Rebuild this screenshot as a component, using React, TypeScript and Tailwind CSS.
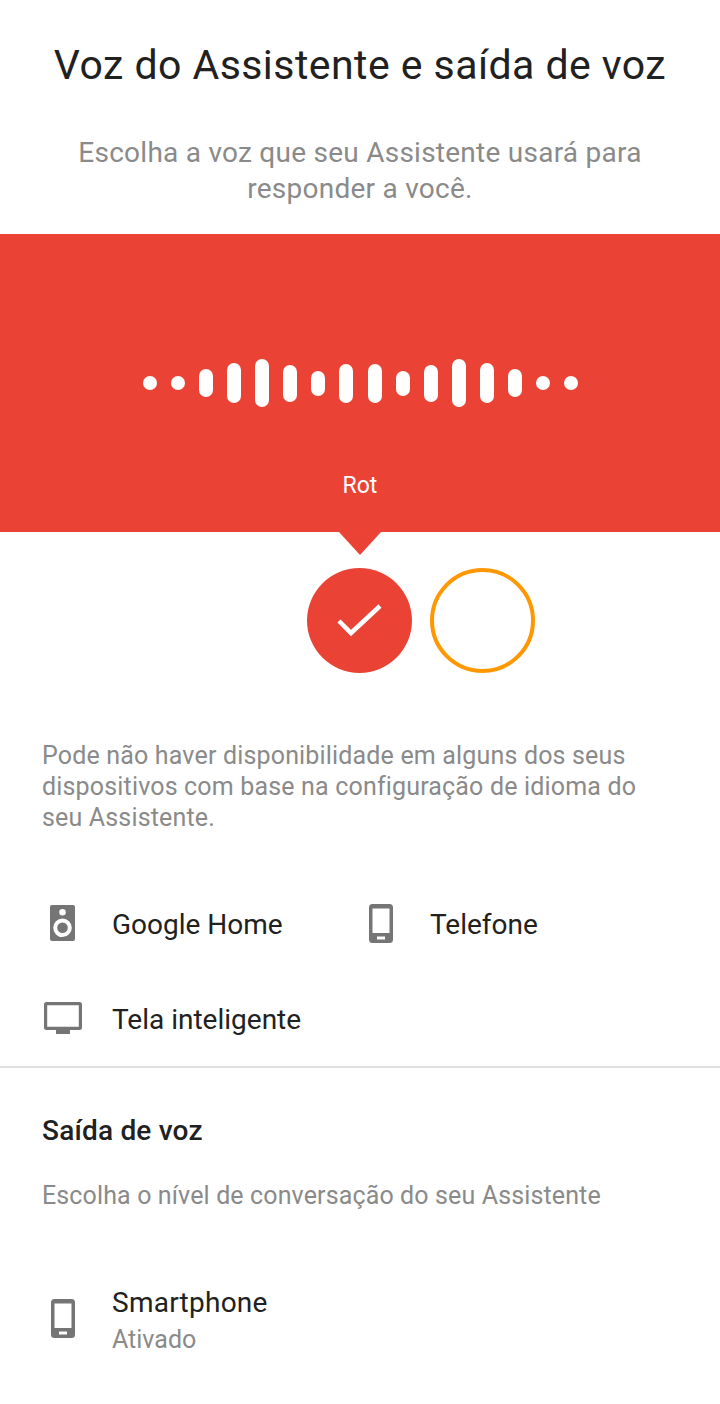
const bars = [14, 14, 28, 40, 48, 37, 25, 39, 39, 25, 37, 48, 40, 28, 14, 14];

function Speaker() {
  return (
    <svg width="25" height="36" viewBox="0 0 25 36" className="block">
      <path fillRule="evenodd" fill="#757575" d="M2 0h21a2 2 0 0 1 2 2v32a2 2 0 0 1-2 2H2a2 2 0 0 1-2-2V2a2 2 0 0 1 2-2Zm10.500 4a3.300 3.300 0 1 0 0 6.600 3.300 3.300 0 0 0 0-6.600Zm0 9.500a9.300 9.300 0 1 0 0 18.600 9.300 9.300 0 0 0 0-18.600Z" />
      <circle cx="12.500" cy="22.800" r="5.300" fill="#757575" />
    </svg>
  );
}

function Phone() {
  return (
    <svg width="24" height="39" viewBox="0 0 24 39" className="block">
      <path fillRule="evenodd" fill="#757575" d="M3.500 0h17A3.500 3.500 0 0 1 24 3.500v32a3.500 3.500 0 0 1-3.500 3.500h-17A3.500 3.500 0 0 1 0 35.500v-32A3.500 3.500 0 0 1 3.500 0Zm0 4.500V29h17V4.500h-17Zm4.500 28v3h8v-3H8Z" />
    </svg>
  );
}

function Tv() {
  return (
    <svg width="38" height="32" viewBox="0 0 38 32" className="block">
      <path fillRule="evenodd" fill="#757575" d="M2.500 0h33A2.500 2.500 0 0 1 38 2.500V25.500a2.500 2.500 0 0 1-2.500 2.500H26V32H12V28H2.500A2.500 2.500 0 0 1 0 25.500V2.500A2.500 2.500 0 0 1 2.500 0Zm.7 3.200v21.600h31.600V3.200H3.200Z" />
    </svg>
  );
}

export default function App() {
  return (
    <div className="h-[1404px] w-[720px] overflow-hidden bg-white font-['Roboto',sans-serif]">
      <h1 className="h-[120px] pt-[37px] text-center text-[41px] leading-[56px] font-normal tracking-[0.45px] whitespace-nowrap text-[#212121]">
        Voz do Assistente e saída de voz
      </h1>
      <p className="h-[114px] px-[60px] pt-[15px] text-center text-[28px] leading-[36px] tracking-[0.25px] text-[#8a8a8a]">
        Escolha a voz que seu Assistente usará para responder a você.
      </p>
      <div className="relative h-[298px] bg-[#ea4335]">
        <div className="flex h-[298px] flex-col items-center">
          <div className="mt-[125px] ml-[1px] flex h-[48px] items-center gap-[13.9px]">
            {bars.map((h, i) => (
              <span key={i} style={{ height: h }} className={`block w-[14px] rounded-full bg-white ${i === 8 ? "ml-[2px]" : ""}`} />
            ))}
          </div>
          <span className="mt-[64px] text-[23px] leading-[30px] font-normal text-white">Rot</span>
        </div>
        <div className="absolute top-[298px] left-[339px] h-0 w-0 border-x-[21px] border-t-[23px] border-x-transparent border-t-[#ea4335]" />
      </div>
      <div className="flex gap-[18px] pt-[36px] pl-[307px]">
        <div className="flex h-[105px] w-[105px] items-center justify-center rounded-full bg-[#ea4335]">
          <svg width="48" height="36" viewBox="0 0 48 36" fill="none">
            <path d="M3 18 15 30 44 3" stroke="white" strokeWidth="4.5" />
          </svg>
        </div>
        <div className="h-[105px] w-[105px] rounded-full border-[4px] border-[#ff9800]" />
      </div>
      <p className="pt-[67px] pr-[50px] pl-[42px] text-[25px] leading-[31px] tracking-[0.17px] text-[#8a8a8a]">
        Pode não haver disponibilidade em alguns dos seus dispositivos com base na configuração de idioma do seu Assistente.
      </p>
      <div className="mt-[60px] flex h-[64px] items-center">
        <div className="mb-[4px] w-[112px] pl-[50px]"><Speaker /></div>
        <span className="w-[257px] text-[28px] leading-[36px] text-[#212121]">Google Home</span>
        <div className="mb-[3px] w-[61px]"><Phone /></div>
        <span className="text-[28px] leading-[36px] text-[#212121]">Telefone</span>
      </div>
      <div className="mt-[31px] flex h-[64px] items-center">
        <div className="mb-[4px] w-[112px] pl-[44px]"><Tv /></div>
        <span className="text-[28px] leading-[36px] text-[#212121]">Tela inteligente</span>
      </div>
      <div className="mt-[14px] h-[2px] bg-[#e0e0e0]" />
      <h2 className="px-[42px] pt-[45px] text-[28px] leading-[36px] font-medium tracking-[0.2px] text-[#212121]">Saída de voz</h2>
      <p className="px-[42px] pt-[29px] text-[25px] leading-[36px] tracking-[0.13px] text-[#8a8a8a]">Escolha o nível de conversação do seu Assistente</p>
      <div className="mt-[71px] flex items-center pl-[51px]">
        <div className="mb-[6px] w-[61px]"><Phone /></div>
        <div>
          <div className="text-[28px] leading-[36px] tracking-[0.25px] text-[#212121]">Smartphone</div>
          <div className="mt-[1px] text-[25px] leading-[36px] text-[#8a8a8a]">Ativado</div>
        </div>
      </div>
    </div>
  );
}
